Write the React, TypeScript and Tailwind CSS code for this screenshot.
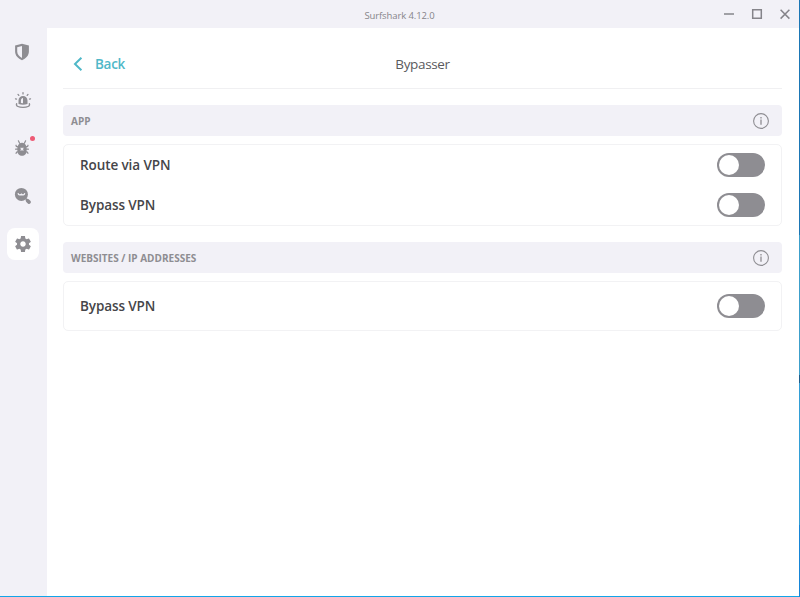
import type { ReactNode } from "react";

function ShieldIcon() {
  return (
    <svg className="-ml-[2px]" width="16" height="18" viewBox="0 0 16 18" fill="#8e8d92">
      <path fillRule="evenodd" d="M8 .8 14.9 2.5V8.6C14.9 12.7 11.8 15.7 8 17.2 4.2 15.7 1.1 12.7 1.1 8.6V2.5ZM8 3 3.2 4.2V8.6C3.2 11.5 5.3 13.7 8 14.9Z" />
    </svg>
  );
}

function AlertIcon() {
  return (
    <svg width="18" height="18" viewBox="0 0 18 18" fill="#8e8d92">
      <path fillRule="evenodd" d="M4.5 13V9.4a4.5 4.5 0 0 1 9 0V13Q9 14.6 4.5 13ZM9 7C7.5 7.2 6.9 8.3 6.9 9.7v2.3L9 12.3Z" />
      <path d="M2.6 12.7c-1 2.6 2.5 3.7 6.4 3.7s7.4-1.1 6.4-3.7" fill="none" stroke="#8e8d92" strokeWidth="1.3" strokeLinecap="round" />
      <path d="M9 1.6v1.3M4 3.4l.8 1M14 3.4l-.8 1M1.5 7.8l1 .3M16.5 7.8l-1 .3" fill="none" stroke="#8e8d92" strokeWidth="1.3" strokeLinecap="round" />
    </svg>
  );
}

function BugIcon() {
  return (
    <svg className="-ml-[2px]" width="16" height="18" viewBox="0 0 16 18">
      <path d="M4.4 1.8 5.6 4.2M11.6 1.8l-1.2 2.4M2 6.2l.4 1.2 2 .6M14 6.2l-.4 1.2-2 .6M1.6 10.2h3M11.4 10.2h3M4.5 12.6l-2 .6-.4 1.2M11.5 12.6l2 .6.4 1.2" fill="none" stroke="#8e8d92" strokeWidth="1.2" strokeLinecap="round" />
      <path d="M5.1 4.7Q8 3 10.9 4.7L12.6 7.6v4.3C12.6 14.6 10.6 16.7 8 16.7S3.4 14.6 3.4 11.9V7.6Z" fill="#8e8d92" />
      <path d="m7 9.2 2 2M9 9.2l-2 2" stroke="#f2f1f7" strokeWidth="1.2" strokeLinecap="round" />
    </svg>
  );
}

function SearchIcon() {
  return (
    <svg width="18" height="18" viewBox="0 0 18 18">
      <circle cx="7.4" cy="7.4" r="6.5" fill="#8e8d92" />
      <path d="m11.8 11.7 1.3 1.3" stroke="#8e8d92" strokeWidth="1.7" />
      <path d="m13.5 13.6 1.6 1.5" stroke="#8e8d92" strokeWidth="3.6" strokeLinecap="round" />
      <path d="M4.2 6.7c.3 1.5 2.3 1.6 3.2.6.9 1 2.9.9 3.2-.6" fill="none" stroke="#f2f1f7" strokeWidth="1.3" strokeLinecap="round" />
    </svg>
  );
}

function GearIcon() {
  return (
    <svg width="20" height="20" viewBox="0 0 24 24" fill="#8e8d92">
      <path d="M19.14 12.94c.04-.3.06-.61.06-.94 0-.32-.02-.64-.07-.94l2.03-1.58c.18-.14.23-.41.12-.61l-1.92-3.32c-.12-.22-.37-.29-.59-.22l-2.39.96c-.5-.38-1.03-.7-1.62-.94l-.36-2.54c-.04-.24-.24-.41-.48-.41h-3.84c-.24 0-.43.17-.47.41l-.36 2.54c-.59.24-1.13.57-1.62.94l-2.39-.96c-.22-.08-.47 0-.59.22L2.74 8.87c-.12.21-.08.47.12.61l2.03 1.58c-.05.3-.09.63-.09.94s.02.64.07.94l-2.03 1.58c-.18.14-.23.41-.12.61l1.92 3.32c.12.22.37.29.59.22l2.39-.96c.5.38 1.03.7 1.62.94l.36 2.54c.05.24.24.41.48.41h3.84c.24 0 .44-.17.47-.41l.36-2.54c.59-.24 1.13-.56 1.62-.94l2.39.96c.22.08.47 0 .59-.22l1.92-3.32c.12-.22.07-.47-.12-.61l-2.01-1.58zM12 15.3c-1.82 0-3.3-1.48-3.3-3.3s1.48-3.3 3.3-3.3 3.3 1.48 3.3 3.3-1.48 3.3-3.3 3.3z" />
    </svg>
  );
}

function NavButton({ active = false, dot = false, children }: { active?: boolean; dot?: boolean; children: ReactNode }) {
  return (
    <button className={`relative flex size-8 items-center justify-center rounded-lg ${active ? "bg-white" : ""}`}>
      {children}
      {dot && <span className="absolute top-[4px] right-[4px] size-[5px] rounded-full bg-[#ee5a75]" />}
    </button>
  );
}

function SectionHeader({ title }: { title: string }) {
  return (
    <div className="flex h-[31px] items-center justify-between rounded-[4px] bg-[#f2f1f7] pr-[13px] pl-2">
      <h2 className="pt-[2px] text-[10px] font-bold text-[#8e8d92]">{title}</h2>
      <svg width="16" height="16" viewBox="0 0 16 16" fill="none" stroke="#8e8d92">
        <circle cx="8" cy="8" r="7.4" strokeWidth="1.1" />
        <path d="M8 6.4v5.4M8 4v1.4" strokeWidth="1.3" />
      </svg>
    </div>
  );
}

function ToggleRow({ label, className = "h-10" }: { label: string; className?: string }) {
  return (
    <div className={`flex items-center justify-between px-4 ${className}`}>
      <span className="pt-px text-[13.5px] font-semibold tracking-[-0.1px] text-[#454549]">{label}</span>
      <button role="switch" aria-checked="false" aria-label={label} className="flex h-6 w-12 items-center rounded-full bg-[#8e8d92] px-[2px]">
        <span className="size-5 rounded-full bg-white" />
      </button>
    </div>
  );
}

export default function App() {
  return (
    <div className="flex h-[597px] w-[800px] overflow-hidden bg-white font-['Open_Sans','Noto_Sans',sans-serif]">
      <div className="flex w-[799px] shrink-0 flex-col border-b border-[#12a5e8]">
        <header className="grid h-7 shrink-0 grid-cols-[1fr_auto_1fr] items-center bg-[#f2f1f7]">
          <span />
          <span className="pt-[4px] text-[9.5px] tracking-[-0.1px] text-[#86858a]">Surfshark 4.12.0</span>
          <svg className="justify-self-end" width="84" height="28" viewBox="0 0 84 28" fill="none" stroke="#85848a" strokeWidth="1.5">
            <path d="M9 14h10" />
            <path d="M37.7 9.7h8.6v8.6h-8.6Z" />
            <path d="m65.6 9.8 8.8 8.8M74.4 9.8l-8.8 8.8" />
          </svg>
        </header>
        <div className="flex flex-1">
          <nav className="flex w-[47px] shrink-0 flex-col gap-4 bg-[#f2f1f7] pt-2 pl-[7px]">
            <NavButton><ShieldIcon /></NavButton>
            <NavButton><AlertIcon /></NavButton>
            <NavButton dot><BugIcon /></NavButton>
            <NavButton><SearchIcon /></NavButton>
            <NavButton active><GearIcon /></NavButton>
          </nav>
          <main className="flex-1 pr-[17px] pl-4">
            <div className="grid h-[61px] grid-cols-[1fr_auto_1fr] items-center border-b border-[#f0f0f2] pt-3">
              <button className="flex items-center gap-3 pl-[10px] text-[13.5px] font-semibold tracking-[-0.3px] text-[#4fb8c8]">
                <svg width="10" height="14" viewBox="0 0 10 14" fill="none" stroke="#4fb8c8" strokeWidth="2">
                  <path d="M8.4.8 2 7l6.4 6.2" />
                </svg>
                <span className="pt-px">Back</span>
              </button>
              <h1 className="text-[13.5px] tracking-[-0.35px] text-[#5a5a5e]">Bypasser</h1>
              <span />
            </div>
            <div className="flex flex-col gap-4 pt-4">
              <section className="flex flex-col gap-2">
                <SectionHeader title="APP" />
                <div className="rounded-[5px] border border-[#f2f2f4]">
                  <ToggleRow label="Route via VPN" />
                  <ToggleRow label="Bypass VPN" />
                </div>
              </section>
              <section className="flex flex-col gap-2">
                <SectionHeader title="WEBSITES / IP ADDRESSES" />
                <div className="rounded-[5px] border border-[#f2f2f4]">
                  <ToggleRow label="Bypass VPN" className="h-12" />
                </div>
              </section>
            </div>
          </main>
        </div>
      </div>
      <div className="flex w-px shrink-0 flex-col">
        <div className="h-[235px] bg-[#1b76b5]" />
        <div className="h-[140px] bg-[#3c9fcb]" />
        <div className="h-[8px] bg-[#1d5f8d]" />
        <div className="h-[142px] bg-[#329ed6]" />
        <div className="flex-1 bg-[#1585d8]" />
      </div>
    </div>
  );
}
